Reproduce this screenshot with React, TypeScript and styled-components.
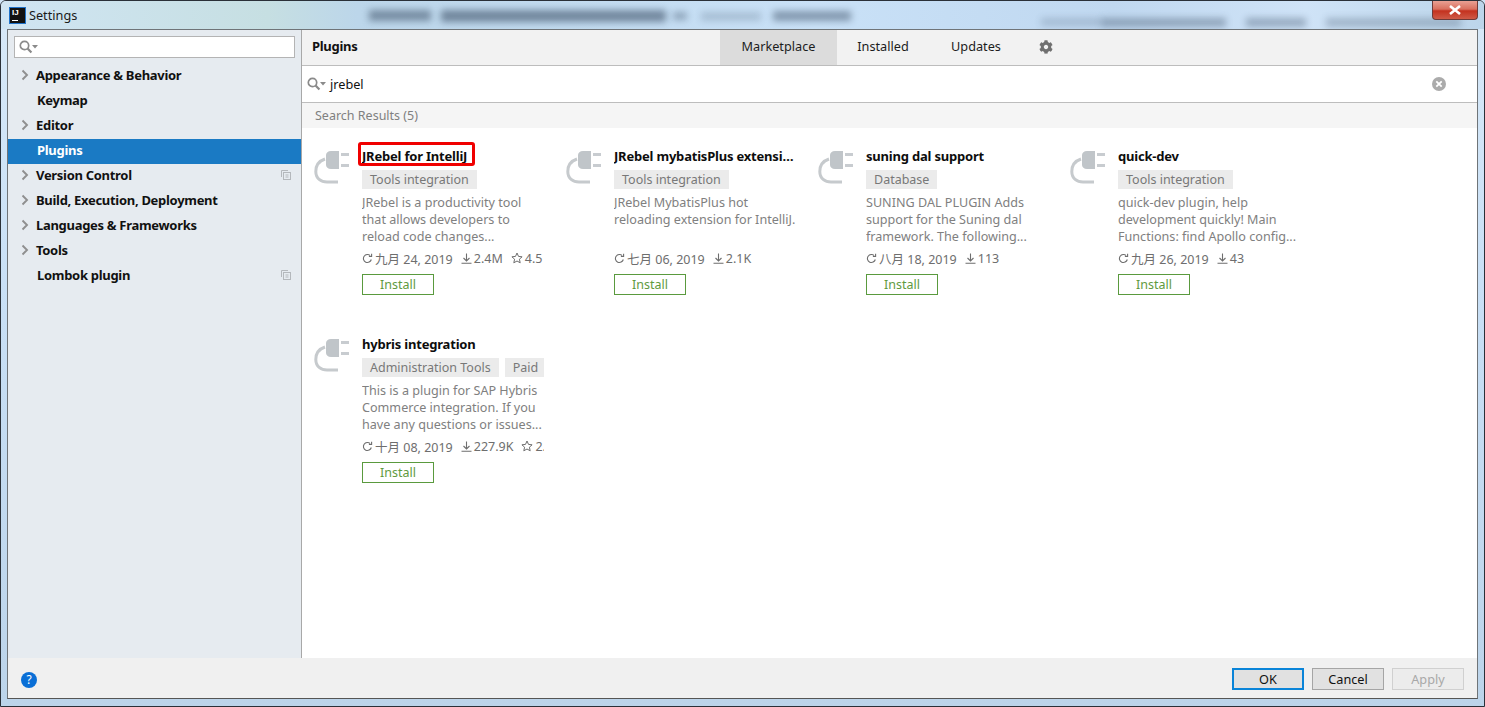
import React from "react";
import styled, { createGlobalStyle } from "styled-components";
import { FaCog } from "react-icons/fa";

const Global = createGlobalStyle`
  html, body { margin: 0; padding: 0; background: #cfe3f5; overflow: hidden; }
  body { font-family: "Noto Sans", "Noto Sans CJK SC", sans-serif; }
`;

const Win = styled.div`
  position: relative; width: 1485px; height: 707px; box-sizing: border-box; overflow: hidden;
  display: flex; flex-direction: column;
  border: 1px solid #2a3038; border-radius: 6px 6px 0 0; padding: 0 6px 7px 6px;
  background: linear-gradient(180deg, #d8e9f8 0%, #c9e0f6 40%, #bcd4ea 100%);
`;
const Blur = styled.span<{ $x: number; $y: number; $w: number; $h: number; $o: number }>`
  position: absolute; left: ${p => p.$x}px; top: ${p => p.$y}px; width: ${p => p.$w}px; height: ${p => p.$h}px;
  background: #3f5269; opacity: ${p => p.$o}; filter: blur(3.5px);
`;
const Title = styled.div`
  position: relative; height: 28px; flex: none; display: flex; align-items: center; gap: 4px; box-sizing: border-box; overflow: hidden;
  font-size: 12.7px; color: #1a1a1a;
  background: linear-gradient(90deg, #d0e5f3 0%, #c6dfe2 18%, #bcd6ea 24%, #c9e1f7 55%, #c0d8f0 75%, #cfe3f7 88%, #bcd5ea 100%);
  margin: 0 -6px 0 -6px; padding-left: 8px;
`;
const Logo = styled.div`
  width: 15px; height: 15px; background: #111; box-shadow: 0 0 0 1px #1f72c9; margin-left: 1px;
  color: #fff; font: bold 8px/10px "Liberation Sans", sans-serif; padding-left: 2px; box-sizing: border-box; position: relative;
  &::after { content: ""; position: absolute; left: 2px; bottom: 2px; width: 6px; height: 1px; background: #fff; }
`;
const Close = styled.div`
  position: absolute; right: 6px; top: 0; width: 46px; height: 19px; box-sizing: border-box; display: flex; align-items: center; justify-content: center;
  border: 1px solid #6e3a38; border-top: none; border-radius: 0 0 4px 4px;
  background: linear-gradient(#e9a093 0%, #d9705f 45%, #c4321f 55%, #cf5a47 100%);
`;
const Frame = styled.div`
  flex: 1; min-height: 0; display: flex; flex-direction: column; border: 1px solid #6f7478; border-bottom-color: #555; background: #f0f0f0;
`;
const Body = styled.div`flex: 1; min-height: 0; display: flex;`;
const Side = styled.div`
  width: 294px; flex: none; box-sizing: border-box; background: #e6ebf0; padding-top: 6px; border-right: 1px solid #a8a8a8;
`;
const SideSearch = styled.div`
  height: 22px; margin: 0 6px; box-sizing: border-box; background: #fff; border: 1px solid #b4b4b4; display: flex; align-items: center; padding-left: 3px;
`;
const Tree = styled.div`margin-top: 6px;`;
const Row = styled.div<{ $sel?: boolean }>`
  height: 25px; display: flex; align-items: center; position: relative; padding-bottom: 4px; box-sizing: border-box;
  background: ${p => (p.$sel ? "#1a7ac4" : "transparent")}; color: ${p => (p.$sel ? "#fff" : "#111")};
  font-size: 13px; font-weight: 700; letter-spacing: -0.3px;
`;
const Arrow = styled.span`width: 28px; flex: none; display: flex; justify-content: flex-end; padding-right: 7px; box-sizing: border-box;`;
const Leaf = styled.span`margin-left: 1px;`;
const CopyMark = styled.span`position: absolute; left: 273px; top: 6px; display: flex;`;
const Main = styled.div`flex: 1; min-width: 0; display: flex; flex-direction: column; background: #fff;`;
const Head = styled.div`
  height: 36px; box-sizing: border-box; flex: none; display: flex; align-items: stretch; background: #f2f2f2; border-bottom: 1px solid #bdbdbd; padding-left: 10px;
`;
const HeadTitle = styled.div`width: 408px; font-size: 13px; font-weight: 700; letter-spacing: -0.3px; color: #111; display: flex; align-items: center; padding-bottom: 4px;`;
const Tab = styled.div<{ $on?: boolean; $w: number }>`
  width: ${p => p.$w}px; display: flex; align-items: center; justify-content: center; font-size: 12.7px; color: #1c1c1c; padding-bottom: 4px; box-sizing: border-box;
  background: ${p => (p.$on ? "#dcdcdc" : "transparent")};
`;
const Gear = styled.div`width: 44px; display: flex; align-items: center; justify-content: center; color: #707070; margin-left: 1px; padding-bottom: 2px; box-sizing: border-box;`;
const SearchRow = styled.div`
  height: 37px; flex: none; box-sizing: border-box; display: flex; align-items: center; padding: 0 31px 0 4px; border-bottom: 1px solid #bdbdbd;
  font-size: 12.7px; color: #111; background: #fff;
`;
const Query = styled.span`flex: 1; padding: 0 0 1px 2px;`;
const Clear = styled.span`display: flex;`;
const Results = styled.div`
  height: 25px; flex: none; background: #f5f5f5; padding: 0 0 0 13px; display: flex; align-items: center; font-size: 12.5px; color: #808080;
`;
const Grid = styled.div`
  flex: 1; min-height: 0; display: grid; grid-template-columns: repeat(4, 252px); grid-auto-rows: 188px; padding: 18px 0 0 12px;
`;
const Card = styled.div`display: flex; position: relative;`;
const PlugBox = styled.div`width: 48px; flex: none;`;
const Info = styled.div`width: 182px; overflow: hidden; display: flex; flex-direction: column; align-items: flex-start;`;
const Name = styled.div`
  width: 180px; height: 20px; line-height: 20px; font-size: 13px; font-weight: 700; letter-spacing: -0.2px; color: #0d0d0d; white-space: nowrap; overflow: hidden; text-overflow: ellipsis;
`;
const Tags = styled.div`display: flex; gap: 6px; margin-top: 4px;`;
const Tag = styled.span`height: 19px; line-height: 20px; padding: 0 8px; background: #ebebeb; color: #787878; font-size: 12.5px; white-space: nowrap;`;
const Desc = styled.div`margin-top: 5px; font-size: 12.6px; line-height: 17px; color: #808080; height: 51px; white-space: pre;`;
const Meta = styled.div`
  margin-top: 4px; height: 18px; display: flex; align-items: center; gap: 8px; font-size: 12.5px; color: #6e6e6e; white-space: nowrap;
`;
const MetaItem = styled.span`display: inline-flex; align-items: center; gap: 2px;`;
const Install = styled.div`
  margin-top: 7px; width: 72px; height: 21px; flex: none; box-sizing: border-box; border: 1px solid #5a9a3e; color: #5f9a40; font-size: 12.5px; display: flex; align-items: center; justify-content: center;
`;
const Mark = styled.div`
  position: absolute; left: 44px; top: -4px; width: 117px; height: 24px; box-sizing: border-box; border: 3px solid #f00000; border-radius: 3px;
`;
const Foot = styled.div`
  height: 40px; flex: none; display: flex; align-items: center; gap: 8px; background: #f0f0f0; padding: 2px 13px 0 13px; box-sizing: border-box;
`;
const Help = styled.div`
  width: 16px; height: 16px; border-radius: 50%; background: #0a6fd6; color: #fff; font-size: 12px; line-height: 16px; text-align: center; margin: 2px auto 0 0;
`;
const Btn = styled.div<{ $kind?: "ok" | "off" }>`
  width: 72px; height: 22px; box-sizing: border-box; display: flex; align-items: center; justify-content: center; font-size: 12.7px; padding-bottom: 1px;
  border: ${p => (p.$kind === "ok" ? "2px solid #0a84d8" : p.$kind === "off" ? "1px solid #d0d0d0" : "1px solid #a5a5a5")};
  background: ${p => (p.$kind === "off" ? "#ececec" : "#e1e1e1")};
  color: ${p => (p.$kind === "off" ? "#a8a8a8" : "#111")};
`;

const Search = () => (
  <svg width="22" height="16" viewBox="0 0 22 16" fill="none">
    <circle cx="6.5" cy="6.5" r="4.2" stroke="#8a8a8a" strokeWidth="1.7" />
    <path d="M9.6 9.6 L13.4 13.6" stroke="#8a8a8a" strokeWidth="2.2" />
    <path d="M14 6h6l-3 3.5z" fill="#8a8a8a" />
  </svg>
);
const Chevron = () => (
  <svg width="8" height="12" viewBox="0 0 8 12" fill="none"><path d="M1.5 1.5 L6 6 L1.5 10.5" stroke="#8f8f8f" strokeWidth="1.9" /></svg>
);
const Copy = () => (
  <svg width="10" height="10" viewBox="0 0 10 10" fill="none" stroke="#b4b8bc">
    <path d="M.5 7V.5H7" /><rect x="2.5" y="2.5" width="7" height="7" /><path d="M4.5 5h3M4.5 7h3" />
  </svg>
);
const Plug = () => (
  <svg width="48" height="48" viewBox="0 0 48 48" fill="none">
    <path d="M17 5h8v18h-8c-3 0-5-2-5-4V9c0-2 2-4 5-4z" fill="#c0c5c9" />
    <rect x="27" y="7" width="8" height="3" fill="#c8ccd0" />
    <rect x="27" y="18" width="8" height="3" fill="#c8ccd0" />
    <path d="M11 13C5 15 1.8 20 1.8 25.5C1.8 32.5 7 36 13 36H24" stroke="#c6cacd" strokeWidth="3" />
  </svg>
);
const Refresh = () => (
  <svg width="11" height="11" viewBox="0 0 11 11" fill="none" stroke="#6e6e6e" strokeWidth="1.1">
    <path d="M9.3 6.5A4 4 0 1 1 8.2 2.6" /><path d="M9.6.8v2.7H6.9" />
  </svg>
);
const Down = () => (
  <svg width="11" height="11" viewBox="0 0 11 11" fill="none" stroke="#6e6e6e" strokeWidth="1.1">
    <path d="M5.5.5v7M2.5 5l3 3 3-3M.5 10.3h10" />
  </svg>
);
const Star = () => (
  <svg width="12" height="12" viewBox="0 0 12 12" fill="none" stroke="#6e6e6e" strokeWidth="1">
    <path d="M6 1l1.5 3.4 3.6.4-2.7 2.4.8 3.6L6 9l-3.2 1.8.8-3.6L.9 4.8l3.6-.4z" />
  </svg>
);

const blobs = [
  { x: 368, y: 9, w: 62, h: 11, o: 0.55 },
  { x: 440, y: 9, w: 225, h: 12, o: 0.6 },
  { x: 672, y: 11, w: 14, h: 8, o: 0.4 },
  { x: 700, y: 11, w: 60, h: 9, o: 0.22 },
  { x: 772, y: 10, w: 78, h: 10, o: 0.5 },
  { x: 1040, y: 17, w: 60, h: 8, o: 0.22 },
  { x: 1100, y: 17, w: 125, h: 9, o: 0.4 },
  { x: 1245, y: 17, w: 60, h: 9, o: 0.38 },
  { x: 1325, y: 17, w: 135, h: 9, o: 0.3 },
];
const tree = [
  { t: "Appearance & Behavior", a: true },
  { t: "Keymap" },
  { t: "Editor", a: true },
  { t: "Plugins", sel: true },
  { t: "Version Control", a: true, c: true },
  { t: "Build, Execution, Deployment", a: true },
  { t: "Languages & Frameworks", a: true },
  { t: "Tools", a: true },
  { t: "Lombok plugin", c: true },
];
const cards = [
  { n: "JRebel for IntelliJ", tags: ["Tools integration"], d: "JRebel is a productivity tool\nthat allows developers to\nreload code changes...", date: "九月 24, 2019", dl: "2.4M", star: "4.5", mark: true },
  { n: "JRebel mybatisPlus extension", tags: ["Tools integration"], d: "JRebel MybatisPlus hot\nreloading extension for IntelliJ.", date: "七月 06, 2019", dl: "2.1K" },
  { n: "suning dal support", tags: ["Database"], d: "SUNING DAL PLUGIN Adds\nsupport for the Suning dal\nframework. The following...", date: "八月 18, 2019", dl: "113" },
  { n: "quick-dev", tags: ["Tools integration"], d: "quick-dev plugin, help\ndevelopment quickly! Main\nFunctions: find Apollo config...", date: "九月 26, 2019", dl: "43" },
  { n: "hybris integration", tags: ["Administration Tools", "Paid"], d: "This is a plugin for SAP Hybris\nCommerce integration. If you\nhave any questions or issues...", date: "十月 08, 2019", dl: "227.9K", star: "2.5" },
];

export default function App() {
  return (
    <Win>
      <Global />
      <Title>
        <Logo>IJ</Logo>
        <span>Settings</span>
        {blobs.map(b => <Blur key={b.x} $x={b.x} $y={b.y} $w={b.w} $h={b.h} $o={b.o} />)}
        <Close>
          <svg width="14" height="10" viewBox="0 0 14 10"><path d="M2 1l10 8M12 1L2 9" stroke="#fff" strokeWidth="2.6" /></svg>
        </Close>
      </Title>
      <Frame>
        <Body>
          <Side>
            <SideSearch><Search /></SideSearch>
            <Tree>
              {tree.map(r => (
                <Row key={r.t} $sel={r.sel}>
                  <Arrow>{r.a && <Chevron />}</Arrow>
                  {r.a ? <span>{r.t}</span> : <Leaf>{r.t}</Leaf>}
                  {r.c && <CopyMark><Copy /></CopyMark>}
                </Row>
              ))}
            </Tree>
          </Side>
          <Main>
            <Head>
              <HeadTitle>Plugins</HeadTitle>
              <Tab $on $w={117}>Marketplace</Tab>
              <Tab $w={92}>Installed</Tab>
              <Tab $w={94}>Updates</Tab>
              <Gear><FaCog size={14} /></Gear>
            </Head>
            <SearchRow>
              <Search />
              <Query>jrebel</Query>
              <Clear>
                <svg width="14" height="14" viewBox="0 0 14 14">
                  <circle cx="7" cy="7" r="7" fill="#ababab" />
                  <path d="M4.3 4.3l5.4 5.4M9.7 4.3l-5.4 5.4" stroke="#fff" strokeWidth="1.8" />
                </svg>
              </Clear>
            </SearchRow>
            <Results>Search Results (5)</Results>
            <Grid>
              {cards.map(c => (
                <Card key={c.n}>
                  <PlugBox><Plug /></PlugBox>
                  <Info>
                    <Name>{c.n}</Name>
                    <Tags>{c.tags.map(t => <Tag key={t}>{t}</Tag>)}</Tags>
                    <Desc>{c.d}</Desc>
                    <Meta>
                      <MetaItem><Refresh />{c.date}</MetaItem>
                      <MetaItem><Down />{c.dl}</MetaItem>
                      {c.star && <MetaItem><Star />{c.star}</MetaItem>}
                    </Meta>
                    <Install>Install</Install>
                  </Info>
                  {c.mark && <Mark />}
                </Card>
              ))}
            </Grid>
          </Main>
        </Body>
        <Foot>
          <Help>?</Help>
          <Btn $kind="ok">OK</Btn>
          <Btn>Cancel</Btn>
          <Btn $kind="off">Apply</Btn>
        </Foot>
      </Frame>
    </Win>
  );
}
